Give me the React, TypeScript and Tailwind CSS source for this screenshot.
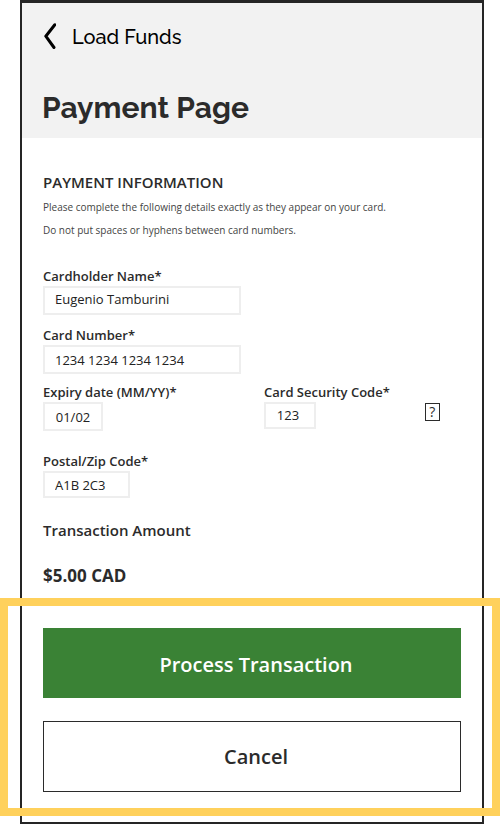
import React from "react";

type FieldProps = {
  id: string;
  label: string;
  value: string;
  className: string;
};

function Field({ id, label, value, className }: FieldProps) {
  return (
    <div className="flex flex-col items-start">
      <label htmlFor={id} className="text-[13px] leading-5 font-semibold">
        {label}
      </label>
      <input
        id={id}
        type="text"
        defaultValue={value}
        className={`border-2 border-[#eeeeee] bg-white text-[13px] text-[#222] outline-none ${className}`}
      />
    </div>
  );
}

export default function App() {
  return (
    <div className="overflow-hidden bg-white font-['Open_Sans',sans-serif] text-[#2b2b2b]">
      <main className="mr-4 ml-5 border-2 border-t-3 border-[#252525] pb-1.5">
        <header className="bg-[#f2f2f2] px-5 pt-5 pb-2.5 font-['Raleway','Lato',sans-serif]">
          <button type="button" className="flex items-center gap-4 text-black">
            <svg width="14" height="28" viewBox="0 0 14 28" fill="none" aria-hidden="true">
              <path
                d="M12.8 1.8 3.8 13.2l8.2 11.3"
                stroke="currentColor"
                strokeWidth="3"
                strokeLinecap="round"
                strokeLinejoin="round"
              />
            </svg>
            <span className="text-xl leading-7 font-medium">Load Funds</span>
          </button>
          <h1 className="mt-[37px] text-3xl leading-10 font-bold">Payment Page</h1>
        </header>

        <form onSubmit={(e) => e.preventDefault()}>
          <section className="px-[21px] pt-[34px]">
            <h2 className="text-[15px] leading-5 font-semibold">PAYMENT INFORMATION</h2>
            <p className="mt-1 text-[10px] leading-[23px] text-[#444]">
              Please complete the following details exactly as they appear on your card.
              <br />
              Do not put spaces or hyphens between card numbers.
            </p>

            <div className="mt-6">
              <Field id="name" label="Cardholder Name*" value="Eugenio Tamburini" className="h-[29px] w-[198px] px-2.5 pb-1" />
            </div>
            <div className="mt-2.5">
              <Field id="number" label="Card Number*" value="1234 1234 1234 1234" className="h-[29px] w-[198px] px-2.5" />
            </div>
            <div className="mt-2 flex items-start">
              <div className="w-[221px]">
                <Field id="expiry" label="Expiry date (MM/YY)*" value="01/02" className="h-[29px] w-[60px] text-center" />
              </div>
              <Field id="code" label="Card Security Code*" value="123" className="h-[27px] w-[52px] pr-1 pb-0.5 text-center" />
              <button
                type="button"
                aria-label="Help"
                className="mt-[21px] ml-[35px] h-[18px] w-[15px] border border-[#2b2b2b] text-sm leading-4"
              >
                ?
              </button>
            </div>
            <div className="mt-5">
              <Field id="postal" label="Postal/Zip Code*" value="A1B 2C3" className="h-[27px] w-[87px] px-2.5" />
            </div>

            <h3 className="mt-[22px] text-[15px] leading-5 font-semibold">Transaction Amount</h3>
            <p className="mt-[26px] text-[17px] leading-5 font-bold">$5.00 CAD</p>
          </section>

          <section className="relative mt-3 flex flex-col gap-[23px] px-[21px] pt-[30px] pb-6">
            <div className="pointer-events-none absolute inset-y-0 -right-[18px] -left-[22px] border-8 border-[#ffd15c]" />
            <button type="submit" className="h-[70px] bg-[#3a8235] pt-1 pl-2 text-xl font-semibold text-white">
              Process Transaction
            </button>
            <button type="button" className="h-[71px] border border-[#2b2b2b] bg-white pl-2 text-xl font-semibold">
              Cancel
            </button>
          </section>
        </form>
      </main>
    </div>
  );
}
